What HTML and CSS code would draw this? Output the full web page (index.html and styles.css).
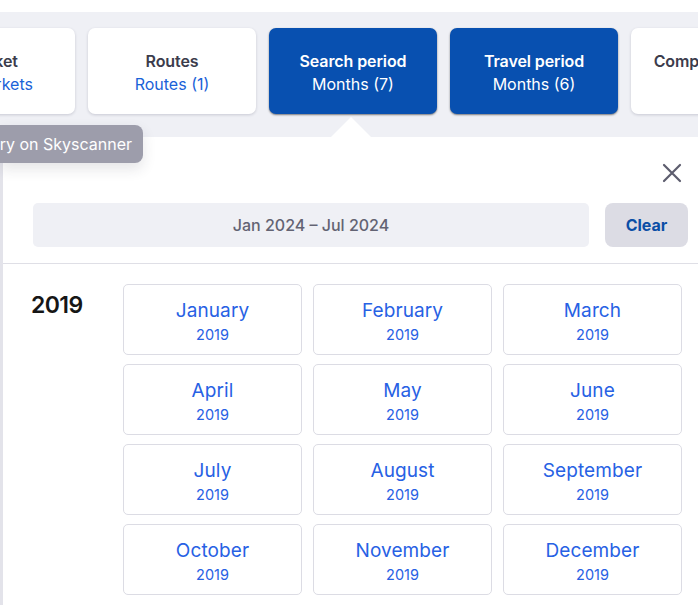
FILE: index.html
```html
<!DOCTYPE html>
<html>
<head>
<meta charset="utf-8">
<link rel="stylesheet" href="styles.css">
</head>
<body>
<div class="page">
  <div class="tabs">
    <div class="tab first"><div class="t-title">Market</div><div class="t-sub">All markets</div></div>
    <div class="tab"><div class="t-title">Routes</div><div class="t-sub">Routes (1)</div></div>
    <div class="tab active"><div class="t-title">Search period</div><div class="t-sub">Months (7)</div></div>
    <div class="tab active"><div class="t-title">Travel period</div><div class="t-sub">Months (6)</div></div>
    <div class="tab"><div class="t-title">Compare routes</div><div class="t-sub">&nbsp;</div></div>
  </div>
  <div class="body-row">
    <div class="side-strip"></div>
    <div class="popover">
      <div class="notch"></div>
      <div class="pop-head">
        <svg class="close" width="20" height="20" viewBox="0 0 20 20"><path d="M2 2 L18 18 M18 2 L2 18" stroke="#5d5d6e" stroke-width="2.2" stroke-linecap="round"/></svg>
      </div>
      <div class="search-row">
        <div class="range">Jan 2024 – Jul 2024</div>
        <div class="clear">Clear</div>
      </div>
      <div class="divider"></div>
      <div class="year-sec">
        <div class="year">2019</div>
        <div class="grid">
          <div class="m"><div class="mn">January</div><div class="my">2019</div></div>
          <div class="m"><div class="mn">February</div><div class="my">2019</div></div>
          <div class="m"><div class="mn">March</div><div class="my">2019</div></div>
          <div class="m"><div class="mn">April</div><div class="my">2019</div></div>
          <div class="m"><div class="mn">May</div><div class="my">2019</div></div>
          <div class="m"><div class="mn">June</div><div class="my">2019</div></div>
          <div class="m"><div class="mn">July</div><div class="my">2019</div></div>
          <div class="m"><div class="mn">August</div><div class="my">2019</div></div>
          <div class="m"><div class="mn">September</div><div class="my">2019</div></div>
          <div class="m"><div class="mn">October</div><div class="my">2019</div></div>
          <div class="m"><div class="mn">November</div><div class="my">2019</div></div>
          <div class="m"><div class="mn">December</div><div class="my">2019</div></div>
        </div>
      </div>
    </div>
  </div>
  <div class="tooltip"><span>Search history on Skyscanner</span></div>
</div>
</body>
</html>
```

FILE: styles.css
```css
* { box-sizing: border-box; }
html, body { margin: 0; padding: 0; background: #fff; overflow: hidden; }
body { font-family: Inter, "Noto Sans", sans-serif; width: 698px; height: 605px; }
.page { position: relative; width: 698px; height: 605px; overflow: hidden; }

.tabs {
  margin-top: 12px;
  height: 125px;
  background: #eff0f5;
  display: flex;
  gap: 13px;
  padding-top: 16px;
}
.tab {
  flex: 0 0 168px;
  height: 86px;
  background: #fff;
  border-radius: 7px;
  box-shadow: 0 1px 3px rgba(30,30,60,0.18);
  display: flex;
  flex-direction: column;
  align-items: center;
  justify-content: center;
  gap: 3px;
  padding-top: 2px;
  white-space: nowrap;
}
.tab.first { margin-left: -93px; }
.t-title { font-size: 16px; font-weight: 600; color: #3c3c4c; letter-spacing: -0.1px; }
.t-sub { font-size: 16px; color: #1a62d8; letter-spacing: 0; }
.tab.active { background: #0850b0; box-shadow: 0 1px 2px rgba(0,0,0,0.5); }
.tab.active .t-title, .tab.active .t-sub { color: #fff; }

.body-row { display: flex; height: 468px; }
.side-strip { width: 3px; background: #e3e3ea; }
.popover {
  position: relative;
  flex: 1;
  background: #fff;
}
.notch {
  position: absolute;
  left: 327px;
  top: -20px;
  width: 0; height: 0;
  border-left: 21px solid transparent;
  border-right: 21px solid transparent;
  border-bottom: 21px solid #fff;
}
.pop-head { height: 66px; display: flex; justify-content: flex-end; align-items: flex-start; padding: 26px 16px 0 0; }
.close { display: block; }

.search-row { display: flex; gap: 16px; padding: 0 10px 0 30px; height: 44px; }
.range {
  flex: 1;
  background: #eff0f5;
  border-radius: 5px;
  display: flex; align-items: center; justify-content: center;
  font-size: 16px; font-weight: 500; color: #636373;
}
.clear {
  width: 83px;
  background: #dcdce4;
  border-radius: 8px;
  display: flex; align-items: center; justify-content: center;
  font-size: 16px; font-weight: 700; color: #0b4ea6;
}
.divider { height: 1px; background: #dfdfe6; margin-top: 16px; }

.year-sec { display: flex; padding: 20px 16px 0 28px; }
.year { width: 92px; font-size: 23px; font-weight: 600; color: #161616; letter-spacing: -0.6px; padding-top: 7px; }
.grid {
  display: grid;
  grid-template-columns: repeat(3, 179px);
  grid-auto-rows: 71px;
  column-gap: 11px;
  row-gap: 9px;
}
.m {
  border: 1px solid #dcdce4;
  border-radius: 5px;
  display: flex; flex-direction: column; align-items: center; justify-content: center;
  gap: 4px;
  padding-top: 2px;
}
.mn { font-size: 19px; color: #2761e4; letter-spacing: 0.1px; }
.my { font-size: 14.5px; color: #2761e4; }

.tooltip {
  position: absolute;
  left: 0; top: 125px;
  width: 143px; height: 38px;
  background: #9d9dab;
  border-radius: 0 8px 8px 0;
  overflow: hidden;
  display: flex; align-items: center; justify-content: flex-end;
  padding-right: 11px;
  white-space: nowrap;
  color: #fff;
  font-size: 16px;
  box-shadow: 0 6px 14px rgba(40,40,60,0.12);
}
.tooltip span { flex-shrink: 0; }
```
